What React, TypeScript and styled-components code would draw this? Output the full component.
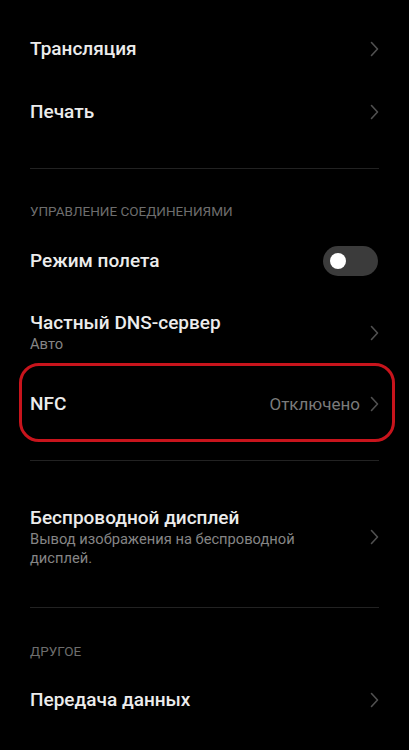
import React from 'react';
import styled, { createGlobalStyle } from 'styled-components';

const GlobalStyle = createGlobalStyle`
  html, body {
    margin: 0;
    padding: 0;
    background: #000;
  }
  body {
    font-family: Roboto, "Noto Sans", "Liberation Sans", sans-serif;
    -webkit-font-smoothing: antialiased;
  }
`;

const Screen = styled.div`
  width: 409px;
  height: 750px;
  background: #000;
  overflow: hidden;
  padding-top: 17px;
  box-sizing: border-box;
`;

const Row = styled.div<{ $h?: number; $outlined?: boolean }>`
  position: relative;
  display: flex;
  align-items: center;
  justify-content: space-between;
  height: ${(p) => p.$h ?? 63}px;
  margin: 0 30px;
  &::after {
    content: '';
    display: ${(p) => (p.$outlined ? 'block' : 'none')};
    position: absolute;
    top: -10px;
    bottom: -7px;
    left: -11px;
    right: -16px;
    border: 3px solid #c8141c;
    border-radius: 20px;
    pointer-events: none;
  }
`;

const TextBlock = styled.div<{ $max?: number }>`
  display: flex;
  flex-direction: column;
  max-width: ${(p) => (p.$max ? `${p.$max}px` : 'none')};
`;

const Title = styled.div`
  font-size: 19px;
  line-height: 24px;
  font-weight: 500;
  color: #ececec;
`;

const Subtitle = styled.div`
  font-size: 14.7px;
  line-height: 19px;
  color: #858585;
`;

const Right = styled.div`
  display: flex;
  align-items: center;
  gap: 10px;
`;

const Value = styled.span`
  font-size: 17px;
  color: #7a7a7a;
`;

const Divider = styled.div<{ $top: number }>`
  height: 1px;
  background: #222;
  margin: ${(p) => p.$top}px 30px 0;
`;

const SectionHeader = styled.div<{ $top: number; $bottom: number }>`
  margin: 0 30px;
  padding: ${(p) => p.$top}px 0 ${(p) => p.$bottom}px;
  font-size: 13.5px;
  line-height: 16px;
  color: #6e6e6e;
`;

const Toggle = styled.div`
  width: 55px;
  height: 30px;
  border-radius: 15px;
  background: #3b3b3b;
  display: flex;
  align-items: center;
  padding-left: 7px;
  box-sizing: border-box;
  margin-right: 1px;
`;

const Knob = styled.div`
  width: 16px;
  height: 16px;
  border-radius: 50%;
  background: #fff;
`;

const TallBlock = styled.div`
  display: flex;
  align-items: center;
  justify-content: space-between;
  margin: 0 30px;
  padding: 45px 0 39px;
`;

const Chevron: React.FC = () => (
  <svg width="9" height="16" viewBox="0 0 9 16" fill="none">
    <path d="M1.5 1.5 L7.5 8 L1.5 14.5" stroke="#505050" strokeWidth="1.6" strokeLinecap="round" strokeLinejoin="round" />
  </svg>
);

const App: React.FC = () => (
  <>
    <GlobalStyle />
    <Screen>
      <Row>
        <Title>Трансляция</Title>
        <Chevron />
      </Row>
      <Row>
        <Title>Печать</Title>
        <Chevron />
      </Row>
      <Divider $top={25} />
      <SectionHeader $top={34} $bottom={11}>УПРАВЛЕНИЕ СОЕДИНЕНИЯМИ</SectionHeader>
      <Row $h={62}>
        <Title>Режим полета</Title>
        <Toggle>
          <Knob />
        </Toggle>
      </Row>
      <Row $h={81}>
        <TextBlock>
          <Title>Частный DNS-сервер</Title>
          <Subtitle>Авто</Subtitle>
        </TextBlock>
        <Chevron />
      </Row>
      <Row $h={62} $outlined>
        <Title>NFC</Title>
        <Right>
          <Value>Отключено</Value>
          <Chevron />
        </Right>
      </Row>
      <Divider $top={25} />
      <TallBlock>
        <TextBlock $max={290}>
          <Title>Беспроводной дисплей</Title>
          <Subtitle>Вывод изображения на беспроводной дисплей.</Subtitle>
        </TextBlock>
        <Chevron />
      </TallBlock>
      <Divider $top={0} />
      <SectionHeader $top={35} $bottom={10}>ДРУГОЕ</SectionHeader>
      <Row $h={62}>
        <Title>Передача данных</Title>
        <Chevron />
      </Row>
    </Screen>
  </>
);

export default App;
